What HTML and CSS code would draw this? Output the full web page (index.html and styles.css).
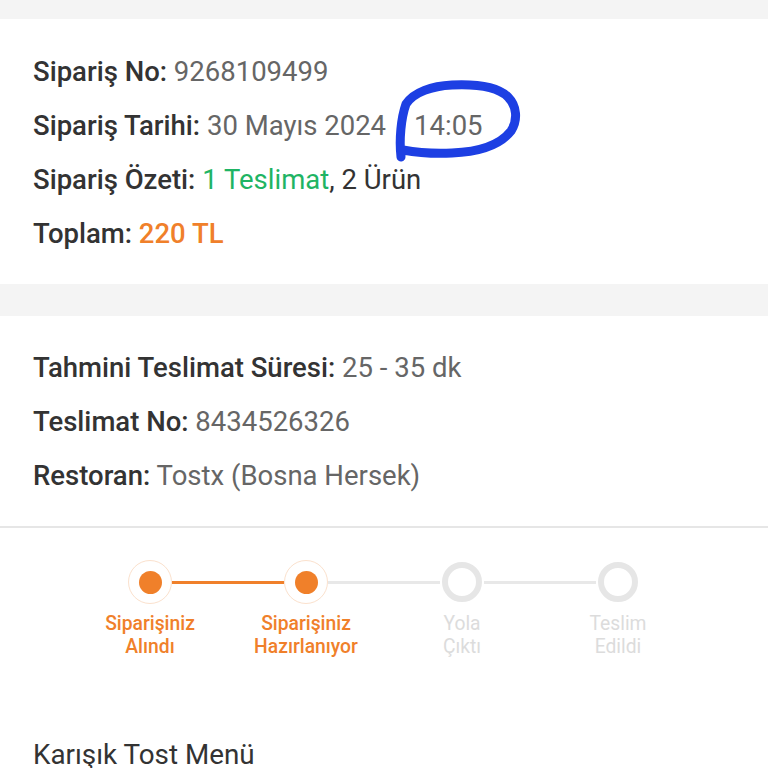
FILE: index.html
```html
<!DOCTYPE html>
<html lang="tr">
<head>
<meta charset="utf-8">
<link rel="stylesheet" href="styles.css">
</head>
<body>
<div class="page">
  <div class="band band-top"></div>
  <section class="card card-order">
    <div class="row"><span class="lbl">Sipariş No:</span> <span class="val">9268109499</span></div>
    <div class="row"><span class="lbl">Sipariş Tarihi:</span> <span class="val">30 Mayıs 2024</span><span class="val time">14:05</span></div>
    <div class="row"><span class="lbl">Sipariş Özeti:</span> <span class="green">1 Teslimat</span><span class="dark">, 2 Ürün</span></div>
    <div class="row"><span class="lbl">Toplam:</span> <span class="orange">220 TL</span></div>
  </section>
  <div class="band"></div>
  <section class="card card-delivery">
    <div class="row"><span class="lbl">Tahmini Teslimat Süresi:</span> <span class="val">25 - 35 dk</span></div>
    <div class="row"><span class="lbl">Teslimat No:</span> <span class="val">8434526326</span></div>
    <div class="row"><span class="lbl">Restoran:</span> <span class="val">Tostx (Bosna Hersek)</span></div>
  </section>
  <div class="divider"></div>
  <section class="stepper">
    <div class="track">
      <span class="dot done"></span>
      <span class="line on"></span>
      <span class="dot done"></span>
      <span class="line"></span>
      <span class="dot todo"></span>
      <span class="line"></span>
      <span class="dot todo"></span>
    </div>
    <div class="labels">
      <div class="step-lbl on">Siparişiniz<br>Alındı</div>
      <div class="step-lbl on">Siparişiniz<br>Hazırlanıyor</div>
      <div class="step-lbl">Yola<br>Çıktı</div>
      <div class="step-lbl">Teslim<br>Edildi</div>
    </div>
  </section>
  <h2 class="menu-title">Karışık Tost Menü</h2>
  <svg class="scribble" width="768" height="200" viewBox="0 0 768 200" aria-hidden="true">
    <path d="M401 157 C399 140 401 118 406 104 C414 92 432 86 452 85 C474 84 497 86 508 97 C517 106 518 120 511 131 C500 145 478 152 452 153 C432 154 414 152 403 150" fill="none" stroke="#1d3fe3" stroke-width="9" stroke-linecap="round" stroke-linejoin="round"/>
  </svg>
</div>
</body>
</html>
```

FILE: styles.css
```css
* { box-sizing: border-box; }
html, body {
  margin: 0;
  padding: 0;
  background: #ffffff;
}
body {
  font-family: Roboto, "Noto Sans", "Liberation Sans", sans-serif;
  color: #333333;
}
.page {
  position: relative;
  width: 768px;
  height: 768px;
  overflow: hidden;
}
.band {
  height: 32px;
  background: #f4f4f4;
}
.band-top {
  height: 19px;
}
.card {
  padding: 26px 33px 23px;
}
.card-delivery {
  padding: 25px 33px 23px;
}
.row {
  font-size: 27.5px;
  line-height: 54px;
  white-space: nowrap;
}
.lbl {
  font-weight: 500;
  color: #333333;
}
.val {
  color: #666666;
}
.time {
  margin-left: 28px;
}
.dark {
  color: #333333;
}
.green {
  color: #1fb464;
}
.orange {
  color: #f0802a;
  font-weight: 500;
}
.divider {
  height: 2px;
  background: #e6e6e6;
}
.stepper {
  padding-top: 32px;
}
.track {
  display: flex;
  align-items: center;
  padding-left: 128px;
}
.dot {
  width: 44px;
  height: 44px;
  border-radius: 50%;
  flex: none;
  display: flex;
  align-items: center;
  justify-content: center;
}
.dot.done {
  border: 1.5px solid #fbe1cd;
  background: #ffffff;
}
.dot.done::after {
  content: "";
  width: 23px;
  height: 23px;
  border-radius: 50%;
  background: #f0802a;
}
.dot.todo::after {
  content: "";
  width: 40px;
  height: 40px;
  border-radius: 50%;
  border: 6px solid #e6e6e6;
  box-sizing: border-box;
}
.line {
  width: 112px;
  height: 3px;
  background: #e8e8e8;
  flex: none;
}
.line.on {
  background: #f0802a;
}
.labels {
  display: grid;
  grid-template-columns: repeat(4, 156px);
  padding-left: 72px;
  margin-top: 8px;
}
.step-lbl {
  text-align: center;
  font-size: 19.3px;
  line-height: 23px;
  font-weight: 400;
  color: #dcdcdc;
}
.step-lbl.on {
  color: #f0802a;
  font-weight: 500;
}
.menu-title {
  margin: 0;
  padding: 80px 33px 0;
  font-size: 27.8px;
  line-height: 34px;
  font-weight: 400;
  color: #333333;
}
.scribble {
  position: absolute;
  left: 0;
  top: 0;
  pointer-events: none;
}
```
